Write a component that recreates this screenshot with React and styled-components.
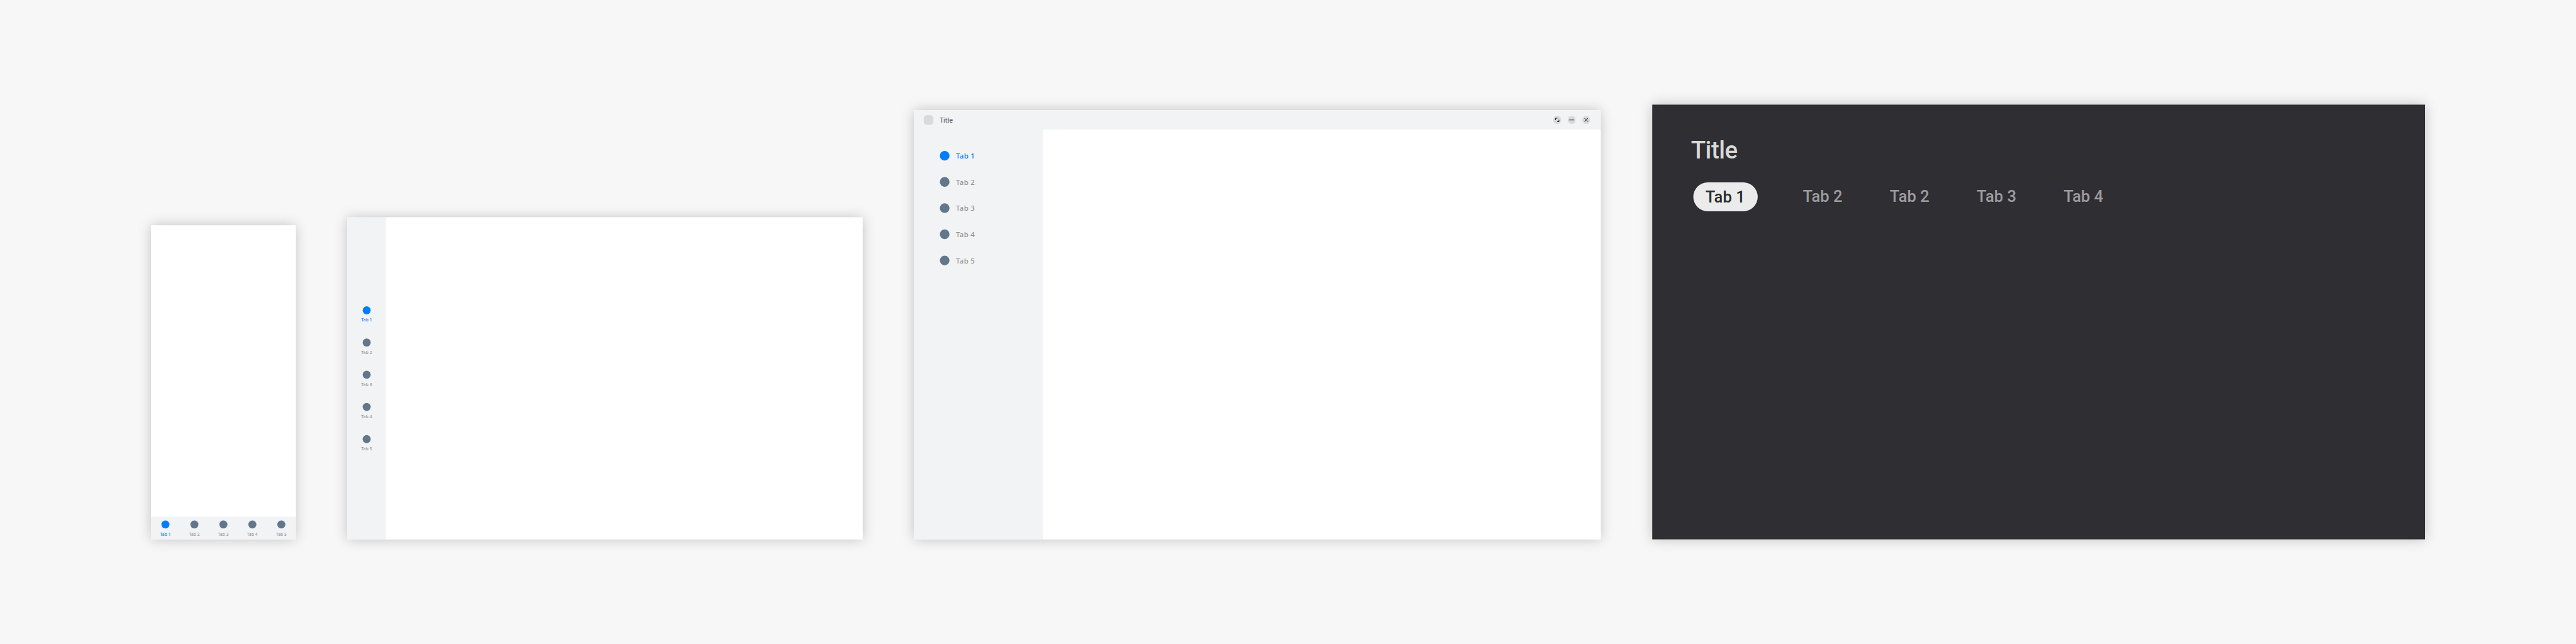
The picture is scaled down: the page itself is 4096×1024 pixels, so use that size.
import React from 'react';
import styled, { createGlobalStyle } from 'styled-components';

const Global = createGlobalStyle`
  * { box-sizing: border-box; }
  html, body { margin: 0; padding: 0; background: #f7f7f7; }
`;

const Viewport = styled.div`
  width: 4096px;
  height: 1024px;
  overflow: hidden;
`;

const Stage = styled.main`
  width: 6400px;
  height: 1600px;
  display: flex;
  align-items: flex-end;
  padding: 0 0 260px 375px;
  background: #f7f7f7;
  font-family: "Noto Sans", "Open Sans", sans-serif;
  transform: scale(0.64);
  transform-origin: 0 0;
`;

const Frame = styled.section`
  flex: none;
  display: flex;
  flex-direction: ${(p) => p.$direction || 'row'};
  width: ${(p) => p.$w}px;
  height: ${(p) => p.$h}px;
  margin-right: 128px;
  background: ${(p) => p.$bg || '#fff'};
  box-shadow: 0 0 30px rgba(0, 0, 0, 0.21);
`;

const Content = styled.div`
  flex: 1;
  background: #fff;
`;

const Dot = styled.span`
  flex: none;
  width: ${(p) => p.$size}px;
  height: ${(p) => p.$size}px;
  border-radius: 50%;
  background: ${(p) => (p.$active ? '#007dff' : '#62778c')};
`;

const Label = styled.span`
  color: ${(p) => (p.$active ? '#007dff' : '#919394')};
  white-space: nowrap;
  font-weight: 500;
`;

const BottomBar = styled.nav`
  display: flex;
  height: 56px;
  background: #f1f3f5;
`;

const StackedTab = styled.div`
  flex: ${(p) => (p.$rail ? 'none' : 1)};
  height: ${(p) => (p.$rail ? '80px' : 'auto')};
  display: flex;
  flex-direction: column;
  align-items: center;
  padding-top: 9px;
  ${Label} {
    margin-top: 6.5px;
    font-size: 10px;
    line-height: 14px;
    letter-spacing: 0.25px;
  }
`;

const Rail = styled.nav`
  width: 96px;
  padding-top: 212px;
  background: #f1f3f5;
`;

const TitleBar = styled.header`
  display: flex;
  align-items: center;
  height: 48px;
  padding: 0 26px 0 24px;
  background: #f1f3f5;
`;

const AppIcon = styled.span`
  width: 24px;
  height: 24px;
  border-radius: 8px;
  background: #d9dadc;
`;

const WindowTitle = styled.h1`
  margin: 0 auto 0 16px;
  color: #606162;
  font-size: 16px;
  line-height: 24px;
  font-weight: 500;
  letter-spacing: -0.1px;
`;

const WindowButtons = styled.div`
  display: flex;
  gap: 16px;
`;

const WindowButton = styled.svg`
  display: block;
  width: 20px;
  height: 20px;
  circle { fill: #d9dadc; }
  path {
    fill: none;
    stroke: ${(p) => p.$stroke || '#0c0c0c'};
    stroke-width: ${(p) => p.$weight || 1.5};
  }
`;

const Body = styled.div`
  flex: 1;
  display: flex;
`;

const Sidebar = styled.nav`
  width: 320px;
  padding: 32.5px 0 0 64px;
  background: #f1f3f5;
`;

const SideTab = styled.div`
  display: flex;
  align-items: center;
  height: 65px;
  gap: 16px;
  ${Label} {
    font-size: 18px;
    line-height: 24px;
    letter-spacing: 0.4px;
  }
`;

const TvTitle = styled.h1`
  margin: 77px 0 0 96px;
  color: #d9d9d9;
  font: 500 60px/72px Roboto, sans-serif;
  letter-spacing: -0.7px;
`;

const TvTabs = styled.nav`
  display: flex;
  gap: 56px;
  margin: 44px 0 0 102px;
`;

const TvTab = styled.span`
  width: 160px;
  height: 72px;
  padding-left: ${(p) => (p.$active ? 30 : 31)}px;
  margin-right: ${(p) => (p.$active ? 25 : 0)}px;
  border-radius: 36px;
  color: ${(p) => (p.$active ? '#2b2b2b' : '#9c9c9e')};
  background: ${(p) => (p.$active ? '#ebebeb' : 'transparent')};
  font: 500 40px/${(p) => (p.$active ? 73 : 71)}px Roboto, sans-serif;
`;

const tabs = [1, 2, 3, 4, 5];

function Stacked({ n, rail }) {
  return (
    <StackedTab $rail={rail}>
      <Dot $size={20} $active={n === 1} />
      <Label $active={n === 1}>Tab {n}</Label>
    </StackedTab>
  );
}

function Phone() {
  return (
    <Frame $direction="column" $w={360} $h={780}>
      <Content />
      <BottomBar>
        {tabs.map((n) => <Stacked key={n} n={n} />)}
      </BottomBar>
    </Frame>
  );
}

function Tablet() {
  return (
    <Frame $w={1280} $h={800}>
      <Rail>
        {tabs.map((n) => <Stacked key={n} n={n} rail />)}
      </Rail>
      <Content />
    </Frame>
  );
}

function Desktop() {
  return (
    <Frame $direction="column" $w={1706} $h={1066}>
      <TitleBar>
        <AppIcon />
        <WindowTitle>Title</WindowTitle>
        <WindowButtons>
          <WindowButton viewBox="0 0 20 20">
            <circle cx="10" cy="10" r="10" />
            <path d="M5.7 10.5V5.7H10.5M9.7 14.3H14.3V9.7" />
          </WindowButton>
          <WindowButton viewBox="0 0 20 20" $stroke="#2e2e2f" $weight={1.8}>
            <circle cx="10" cy="10" r="10" />
            <path d="M4 10H16" />
          </WindowButton>
          <WindowButton viewBox="0 0 20 20">
            <circle cx="10" cy="10" r="10" />
            <path d="M5.7 5.7L14.3 14.3M14.3 5.7L5.7 14.3" />
          </WindowButton>
        </WindowButtons>
      </TitleBar>
      <Body>
        <Sidebar>
          {tabs.map((n) => (
            <SideTab key={n}>
              <Dot $size={24} $active={n === 1} />
              <Label $active={n === 1}>Tab {n}</Label>
            </SideTab>
          ))}
        </Sidebar>
        <Content />
      </Body>
    </Frame>
  );
}

function Television() {
  return (
    <Frame $direction="column" $w={1920} $h={1080} $bg="#2f2e33">
      <TvTitle>Title</TvTitle>
      <TvTabs>
        {[1, 2, 2, 3, 4].map((n, i) => (
          <TvTab key={i} $active={i === 0}>Tab {n}</TvTab>
        ))}
      </TvTabs>
    </Frame>
  );
}

export default function App() {
  return (
    <Viewport>
      <Global />
      <Stage>
        <Phone />
        <Tablet />
        <Desktop />
        <Television />
      </Stage>
    </Viewport>
  );
}
